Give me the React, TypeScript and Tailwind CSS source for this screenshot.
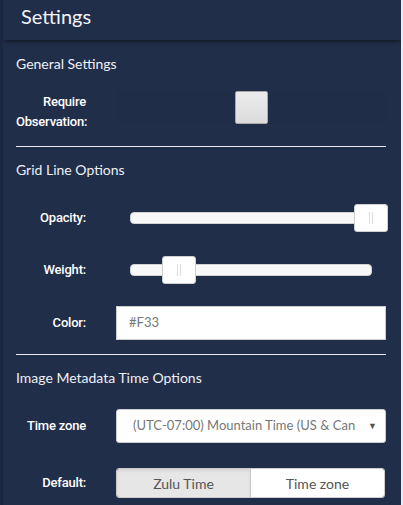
import React from "react";

// Label column on the left, control column on the right
const Row = ({
  label,
  children,
  className = "",
  labelClass = "",
}: {
  label: React.ReactNode;
  children: React.ReactNode;
  className?: string;
  labelClass?: string;
}) => (
  <div className={`flex ${labelClass ? "items-start" : "items-center"} ${className}`}>
    <div
      className={`w-[70px] shrink-0 text-right text-[13px] font-medium leading-[20px] tracking-[-0.2px] text-white ${labelClass}`}
      style={{ fontFamily: "Roboto, 'Liberation Sans', sans-serif" }}
    >
      {label}
    </div>
    <div className="ml-[30px] w-[270px]">{children}</div>
  </div>
);

const Slider = ({ value }: { value: number }) => (
  <div className="relative h-[28px] px-[14px]">
    <div className="relative top-[8px] h-[12px] rounded-[4px] border border-[#d3d3d3] bg-[#f8f8f8]">
      <div
        className="absolute top-[-9px] flex h-[28px] w-[34px] items-center justify-center gap-[2px] rounded-[3px] border border-[#cfcfcf] bg-white"
        style={{ left: `calc(${value}% - 17px)` }}
      >
        <span className="h-[12px] w-px bg-[#ddd]" />
        <span className="h-[12px] w-px bg-[#ddd]" />
      </div>
    </div>
  </div>
);

const SectionTitle = ({ children }: { children: React.ReactNode }) => (
  <div className="text-[14px] leading-[20px] text-[#eef0f4]">{children}</div>
);

export default function App() {
  return (
    <div className="flex h-[505px] w-[403px] bg-[#efece2]" style={{ fontFamily: "Lato, 'Liberation Sans', sans-serif" }}>
      <div className="relative h-full w-[401px] overflow-hidden border-l-[3px] border-[#1b2640] bg-[#212e4a]">
        {/* HEADER */}
        <header className="relative z-10 h-[40px] bg-[#212e4a] pl-[18px] pt-[3px] shadow-[0_2px_4px_rgba(0,0,0,0.45)]">
          <h1 className="text-[20px] leading-[26px] text-[#f2f4f8]">Settings</h1>
        </header>

        <div className="pl-[13px] pr-[12px]">
          {/* GENERAL */}
          <div className="pt-[14px]">
            <SectionTitle>General Settings</SectionTitle>
          </div>
          <Row className="mt-[16px]" labelClass="mt-[2px]" label={<>Require<br />Observation:</>}>
            <div className="flex h-[34px] items-center justify-center rounded-[2px] bg-[#202d48]">
              <div className="h-[33px] w-[33px] rounded-[2px] border border-[#a9a9a9] bg-gradient-to-b from-[#ececec] to-[#dcdcdc]" />
            </div>
          </Row>
          <div className="mt-[14px] h-px w-[370px] bg-[#e8eaee]" />

          {/* GRID LINES */}
          <div className="pt-[13px]">
            <SectionTitle>Grid Line Options</SectionTitle>
          </div>
          <Row className="mt-[24px]" label="Opacity:">
            <Slider value={100} />
          </Row>
          <Row className="mt-[24px]" label="Weight:">
            <Slider value={20} />
          </Row>
          <Row className="mt-[22px]" label="Color:">
            <div className="flex h-[34px] items-center border border-[#ccc] bg-white pl-[12px] text-[13px] text-[#777]">#F33</div>
          </Row>
          <div className="mt-[14px] h-px w-[370px] bg-[#e8eaee]" />

          {/* TIME */}
          <div className="pt-[13px]">
            <SectionTitle>Image Metadata Time Options</SectionTitle>
          </div>
          <Row className="mt-[21px]" label="Time zone">
            <div className="flex h-[34px] items-center rounded-[3px] border border-[#ccc] bg-white pl-[16px] pr-[8px]">
              <span className="w-[222px] shrink-0 overflow-hidden whitespace-nowrap text-[13px] text-[#777]">(UTC-07:00) Mountain Time (US &amp; Canada)</span>
              <span className="ml-auto text-[9px] text-[#555]">▼</span>
            </div>
          </Row>
          <Row className="mt-[25px]" label="Default:">
            <div className="flex h-[30px] w-[269px] overflow-hidden rounded-[3px] border border-[#ccc] text-[14px] text-[#555]">
              <div className="flex flex-1 items-center justify-center bg-[#e6e6e6] shadow-[inset_0_2px_3px_rgba(0,0,0,0.08)]">Zulu Time</div>
              <div className="flex flex-1 items-center justify-center border-l border-[#ccc] bg-white">Time zone</div>
            </div>
          </Row>
        </div>
      </div>
    </div>
  );
}
